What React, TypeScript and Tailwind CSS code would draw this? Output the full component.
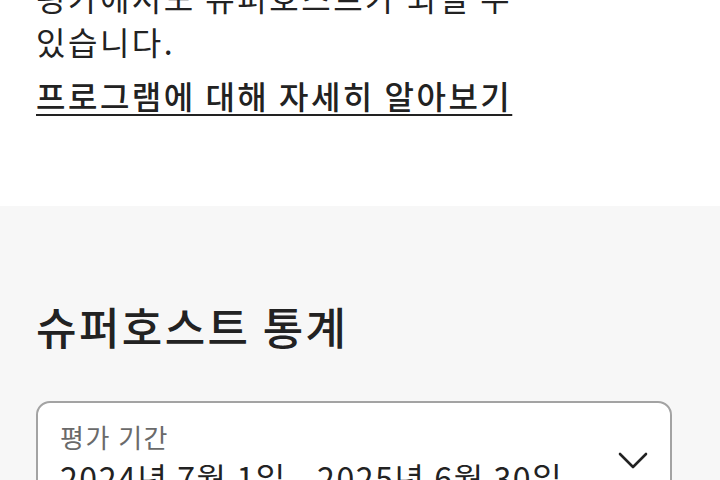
import React from "react"

export default function App() {
    return (
        <div className="w-[720px] h-[480px] overflow-hidden bg-white text-[#222222]" style={{ fontFamily: '"Noto Sans CJK KR", "Noto Sans", sans-serif' }}>
            <section className="px-9 pb-[89px]">
                <p className="text-[32px] leading-[44px] -mt-[25px] tracking-[2.5px]">
                    평가에서도 슈퍼호스트가 되실 수<br />있습니다.
                </p>
                <a href="#" className="inline-block mt-[10px] text-[32px] leading-[44px] font-medium underline underline-offset-[5px] decoration-[2px] tracking-[2.5px]">
                    프로그램에 대해 자세히 알아보기
                </a>
            </section>

            <section className="bg-[#f7f7f7] px-9 pt-[92px]">
                <h2 className="text-[44px] leading-[56px] font-medium tracking-[2.4px]">슈퍼호스트 통계</h2>

                <button className="mt-[47px] w-[636px] flex items-start justify-between bg-white border-2 border-[#a3a3a3] rounded-[14px] pl-[22px] pr-[21px] pt-[16px] pb-[16px] text-left">
                    <div className="flex flex-col">
                        <span className="text-[26px] leading-[36px] text-[#6a6a6a] tracking-[1.5px]">평가 기간</span>
                        <span className="text-[32px] leading-[44px] tracking-[1.6px]">2024년 7월 1일 - 2025년 6월 30일</span>
                    </div>
                    <svg className="mt-[32px]" width="32" height="20" viewBox="0 0 32 20" fill="none" stroke="#222222" strokeWidth="2.6" strokeLinecap="round" strokeLinejoin="round">
                        <path d="M3 3l13 13 13-13" />
                    </svg>
                </button>
            </section>
        </div>
    )
}
